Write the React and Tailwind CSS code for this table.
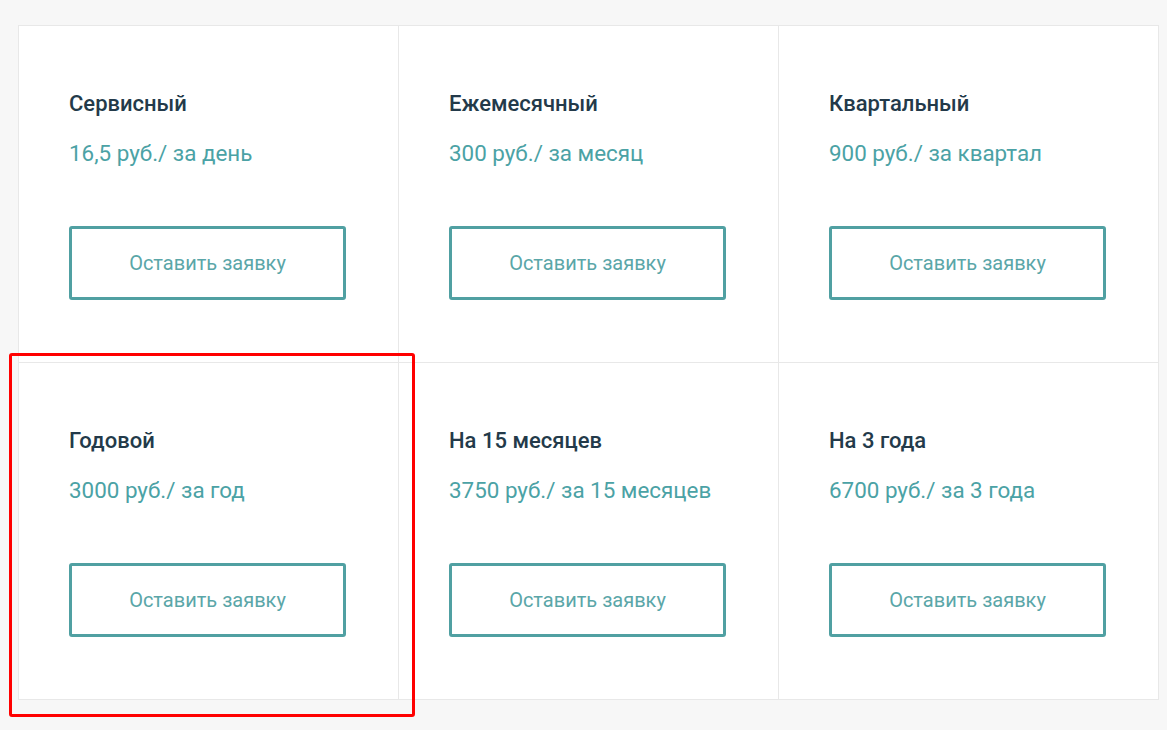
const plans = [
  { name: "Сервисный", price: "16,5 руб./ за день" },
  { name: "Ежемесячный", price: "300 руб./ за месяц" },
  { name: "Квартальный", price: "900 руб./ за квартал" },
  { name: "Годовой", price: "3000 руб./ за год" },
  { name: "На 15 месяцев", price: "3750 руб./ за 15 месяцев" },
  { name: "На 3 года", price: "6700 руб./ за 3 года" },
]

function PlanCard({ plan }) {
  return (
    <div className="flex h-[336px] flex-col bg-white px-[50px] pt-[64px]">
      <h3 className="text-[22px] leading-[28px] font-medium text-[#233a4a]">{plan.name}</h3>
      <p className="mt-[21px] text-[22.4px] leading-[28px] text-[#4ba2a5]">{plan.price}</p>
      <button className="mt-[59px] h-[74px] w-[277px] rounded-[3px] border-[3px] border-[#50a0a2] bg-white text-[20px] text-[#5aa6a8]">
        Оставить заявку
      </button>
    </div>
  )
}

export default function App() {
  return (
    <div
      className="relative min-h-[730px] bg-[#f7f7f7] pt-[25px] pl-[18px]"
      style={{ fontFamily: "Roboto, 'Noto Sans', sans-serif" }}
    >
      <div className="grid w-[1141px] grid-cols-3 gap-px bg-[#e8e8e8] p-px">
        {plans.map((plan) => (
          <PlanCard plan={plan} key={plan.name} />
        ))}
      </div>
      <div className="pointer-events-none absolute top-[353px] left-[9px] h-[364px] w-[406px] rounded-[3px] border-[3px] border-[#ff0000]" />
    </div>
  )
}
